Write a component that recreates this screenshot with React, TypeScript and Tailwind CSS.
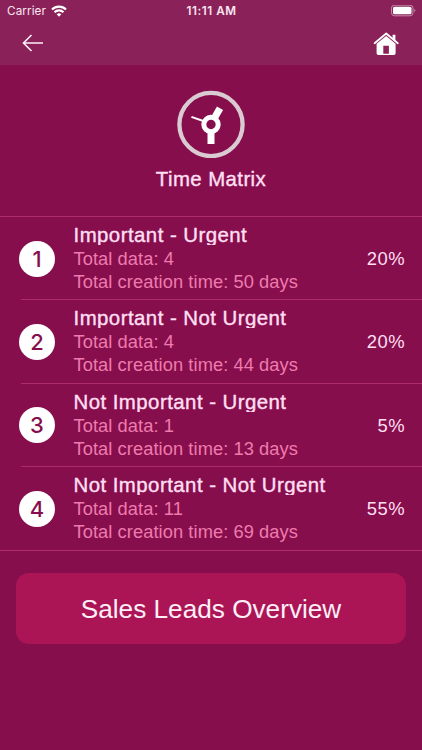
const rows = [
  { n: 1, title: 'Important - Urgent', data: 4, days: 50, pct: '20%' },
  { n: 2, title: 'Important - Not Urgent', data: 4, days: 44, pct: '20%' },
  { n: 3, title: 'Not Important - Urgent', data: 1, days: 13, pct: '5%' },
  { n: 4, title: 'Not Important - Not Urgent', data: 11, days: 69, pct: '55%' },
];

function StatusBar() {
  return (
    <div className="grid h-[22px] grid-cols-3 items-center pl-[7px] pr-[6px] font-['Inter',sans-serif] text-white">
      <div className="flex items-center gap-[5px]">
        <span className="text-[11.7px] leading-[22px] tracking-[0.1px] text-[#fbe6f2]">Carrier</span>
        <svg width="16" height="12" viewBox="0 0 16 12" fill="none" stroke="white" strokeWidth="2.1">
          <path d="M1 4.5a10 10 0 0 1 14 0M3.5 7.2a6.4 6.4 0 0 1 9 0" />
          <path d="M8 11.7 5.7 9.3a3.3 3.3 0 0 1 4.6 0z" fill="white" stroke="none" />
        </svg>
      </div>
      <span className="whitespace-nowrap text-center text-[11.7px] font-semibold leading-[22px] tracking-[0.55px] text-[#fbe6f2]">11:11 AM</span>
      <svg className="justify-self-end" width="26" height="12" viewBox="0 0 26 12">
        <rect x="1.5" y=".2" width="21.5" height="10.6" rx="3" fill="none" stroke="#c78dac" />
        <rect x="3" y="1.7" width="18.5" height="7.6" rx="1.6" fill="white" />
        <path d="M24.3 3.7v3.6c1.4-.6 1.4-3 0-3.6z" fill="#c78dac" />
      </svg>
    </div>
  );
}

export default function App() {
  return (
    <div className="flex h-[750px] w-[422px] flex-col overflow-hidden bg-[#870e4d] font-['Liberation_Sans',Arial,sans-serif]">
      <header className="h-[65px] shrink-0 bg-[#8a2259]">
        <StatusBar />
        <div className="flex h-[43px] items-center justify-between px-[22px]">
          <svg className="-mt-px" width="22" height="18" viewBox="0 0 22 18" fill="none" stroke="#fff0f8" strokeWidth="1.6">
            <path d="M21 9H1.5M9.5 1 1.5 9l8 8" />
          </svg>
          <svg width="28" height="24" viewBox="0 0 28 24" fill="white">
            <path d="M2.6 11.2 14.2 1.5 25.8 11.2" fill="none" stroke="white" strokeWidth="1.8" strokeLinecap="round" strokeLinejoin="round" />
            <path d="M20.6 2.8h2.8v6.2l-2.8-2.4z" />
            <path fillRule="evenodd" d="M14.2 3.9 23.6 11.8V21.3q0 1.7-1.7 1.7H6.3q-1.7 0-1.7-1.7V11.8zM11.3 13.7v8.1h5.6v-8.1z" />
          </svg>
        </div>
      </header>

      <section className="flex h-[151px] shrink-0 flex-col items-center pt-[25px]">
        <svg width="68" height="68" viewBox="0 0 68 68" fill="none" stroke="white">
          <circle cx="34" cy="34.5" r="31.6" stroke="#dacbd3" strokeWidth="4.3" />
          <circle cx="34" cy="34.5" r="7.2" strokeWidth="5" />
          <path d="M34 43v11" strokeWidth="7" />
          <path d="M37.3 28.3 43 18.2" strokeWidth="7" />
          <path d="M27 31.2 14.4 26.9" strokeWidth="2" />
        </svg>
        <h1 className="mt-[9px] text-[20.4px] leading-6 tracking-[0.42px] text-[#ffdff1] [-webkit-text-stroke:0.4px_#ffdff1]">Time Matrix</h1>
      </section>

      <ul className="shrink-0 border-y border-[#ab2c69]">
        {rows.map((r, i) => (
          <li key={r.n} className="flex h-[83.3px] items-center pl-[19px]">
            <span className="flex size-9 shrink-0 items-center justify-center rounded-full bg-white font-['Inter',sans-serif] text-[22px] font-medium leading-none text-[#870e4d]">{r.n}</span>
            <div className={'ml-[-34px] flex h-full flex-1 items-start justify-between pl-[52.5px] pr-[17px] ' + (i < 3 ? 'border-b border-[#ab2c69]' : '')}>
              <div className="whitespace-nowrap pt-[6px] text-[18.3px] leading-[23px] tracking-[0.07px] text-[#ee7bad]">
                <h2 className="mb-[2px] h-[22px] overflow-hidden text-[20.4px] leading-[25px] tracking-[0.46px] text-[#ffdff1] [-webkit-text-stroke:0.4px_#ffdff1]">{r.title}</h2>
                <p>Total data: {r.data}</p>
                <p>Total creation time: {r.days} days</p>
              </div>
              <span className="pt-[30px] text-[18.4px] leading-6 tracking-[0.5px] text-[#ffdff1]">{r.pct}</span>
            </div>
          </li>
        ))}
      </ul>

      <button className="mx-4 mt-[22px] h-[71px] shrink-0 rounded-[13px] bg-[#ac1555] pt-px text-[26.2px] text-[#ffeff8]">
        Sales Leads Overview
      </button>
    </div>
  );
}
